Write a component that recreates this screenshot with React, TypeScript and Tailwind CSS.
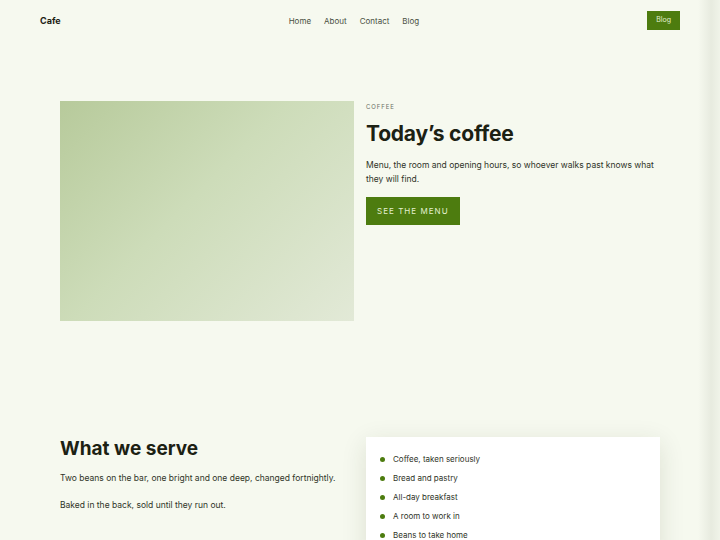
import React from 'react';

const links = ['Home', 'About', 'Contact', 'Blog'];
const serves = [
  'Coffee, taken seriously',
  'Bread and pastry',
  'All-day breakfast',
  'A room to work in',
  'Beans to take home',
];

const App: React.FC = () => {
  return (
    <div className="relative min-h-[540px] bg-[#f6f9ef] text-[#1c2113] font-['Inter','Noto_Sans',sans-serif] overflow-hidden">
      {/* header */}
      <header className="h-[41px] px-10 flex items-center justify-between">
        <span className="text-[9px] font-bold">Cafe</span>
        <nav className="flex items-center gap-[13px] text-[8px] text-[#4a5043]">
          {links.map((l) => (
            <a key={l} href="#">{l}</a>
          ))}
        </nav>
        <a href="#" className="bg-[#4d7c0f] text-[#e3f0cf] text-[7px] px-[9px] h-[19px] flex items-center">
          Blog
        </a>
      </header>

      {/* hero */}
      <section className="w-[600px] mx-auto mt-[60px] grid grid-cols-[294px_294px] gap-3">
        <div className="h-[220px] bg-[linear-gradient(135deg,#b7ca9b_0%,#cddcb9_45%,#e2e9d7_100%)]" />
        <div className="pt-[1px]">
          <p className="text-[6px] tracking-[0.15em] text-[#6b7064] uppercase">Coffee</p>
          <h1 className="mt-[11px] text-[21px] font-bold leading-[24px] tracking-[-0.01em]">Today’s coffee</h1>
          <p className="mt-[12px] text-[8.5px] leading-[14px] text-[#2f3428]">
            Menu, the room and opening hours, so whoever walks past knows what they will find.
          </p>
          <a href="#" className="mt-[11px] inline-flex items-center h-[28px] px-[11px] bg-[#4d7c0f] text-[#e3f0cf] text-[8px] tracking-[0.13em] uppercase">
            See the menu
          </a>
        </div>
      </section>

      {/* what we serve */}
      <section className="w-[600px] mx-auto mt-[116px] grid grid-cols-[294px_294px] gap-3">
        <div className="pt-[1px]">
          <h2 className="text-[19px] font-bold leading-[22px]">What we serve</h2>
          <p className="mt-[11px] text-[8.5px] leading-[14px] text-[#2f3428]">
            Two beans on the bar, one bright and one deep, changed fortnightly.
          </p>
          <p className="mt-[13px] text-[8.5px] leading-[14px] text-[#2f3428]">
            Baked in the back, sold until they run out.
          </p>
        </div>
        <div className="bg-white shadow-[0_6px_24px_rgba(40,50,20,0.12)] px-[14px] pt-[15px] pb-4">
          <ul className="flex flex-col gap-[5px]">
            {serves.map((s) => (
              <li key={s} className="flex items-center h-[14px] text-[8px] text-[#2f3428]">
                <span className="w-[5px] h-[5px] rounded-full bg-[#4d7c0f] mr-[8px]" />
                {s}
              </li>
            ))}
          </ul>
        </div>
      </section>

      {/* right edge shade */}
      <div className="pointer-events-none absolute top-0 right-0 h-full w-[22px] bg-[linear-gradient(90deg,rgba(0,0,0,0)_0%,rgba(60,70,40,0.08)_60%,rgba(60,70,40,0.03)_100%)]" />
    </div>
  );
};

export default App;
